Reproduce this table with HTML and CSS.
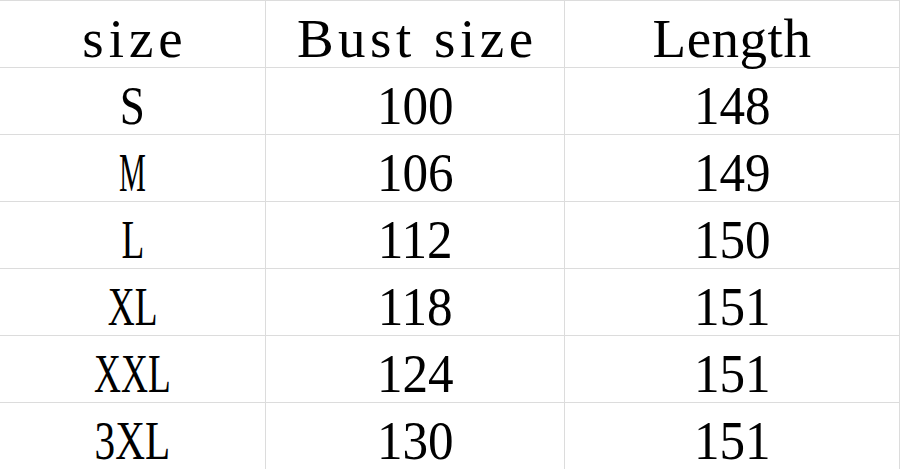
FILE: index.html
```html
<!DOCTYPE html>
<html>
<head>
<meta charset="utf-8">
<link rel="stylesheet" href="styles.css">
</head>
<body>
<div class="table">
  <div class="cell"><span class="t head-size">size</span></div>
  <div class="cell"><span class="t head-bust">Bust size</span></div>
  <div class="cell last"><span class="t head-len">Length</span></div>

  <div class="cell"><span class="t lbl lbl-s">S</span></div>
  <div class="cell"><span class="t num">100</span></div>
  <div class="cell last"><span class="t num">148</span></div>

  <div class="cell"><span class="t lbl lbl-m">M</span></div>
  <div class="cell"><span class="t num">106</span></div>
  <div class="cell last"><span class="t num">149</span></div>

  <div class="cell"><span class="t lbl">L</span></div>
  <div class="cell"><span class="t num">112</span></div>
  <div class="cell last"><span class="t num">150</span></div>

  <div class="cell"><span class="t lbl">XL</span></div>
  <div class="cell"><span class="t num">118</span></div>
  <div class="cell last"><span class="t num">151</span></div>

  <div class="cell"><span class="t lbl">XXL</span></div>
  <div class="cell"><span class="t num">124</span></div>
  <div class="cell last"><span class="t num">151</span></div>

  <div class="cell"><span class="t lbl lbl-3">3XL</span></div>
  <div class="cell"><span class="t num">130</span></div>
  <div class="cell last"><span class="t num">151</span></div>
</div>
</body>
</html>
```

FILE: styles.css
```css
html, body {
  margin: 0;
  padding: 0;
  background: #ffffff;
  overflow: hidden;
}

.table {
  display: grid;
  grid-template-columns: 266px 299px 335px;
  grid-auto-rows: 67px;
  border-top: 1px solid #dcdcdc;
  width: 900px;
  font-family: "Liberation Serif", "Times New Roman", serif;
  font-size: 55px;
  color: #000000;
}

.cell {
  border-right: 1px solid #dcdcdc;
  border-bottom: 1px solid #dcdcdc;
  display: flex;
  align-items: center;
  justify-content: center;
  padding-top: 8px;
  box-sizing: border-box;
}

.t {
  display: inline-block;
  line-height: 1;
  white-space: pre;
}

.head-size { letter-spacing: 5px; margin-right: -5px; }
.head-bust { letter-spacing: 4.5px; margin-right: -4.5px; }
.head-len { letter-spacing: 0.5px; }

.num { transform: scaleX(0.93); }

.lbl { transform: scaleX(0.68); }
.lbl-s { transform: scaleX(0.82); }
.lbl-m { transform: scaleX(0.55); }
.lbl-3 { transform: scaleX(0.75); }
```
